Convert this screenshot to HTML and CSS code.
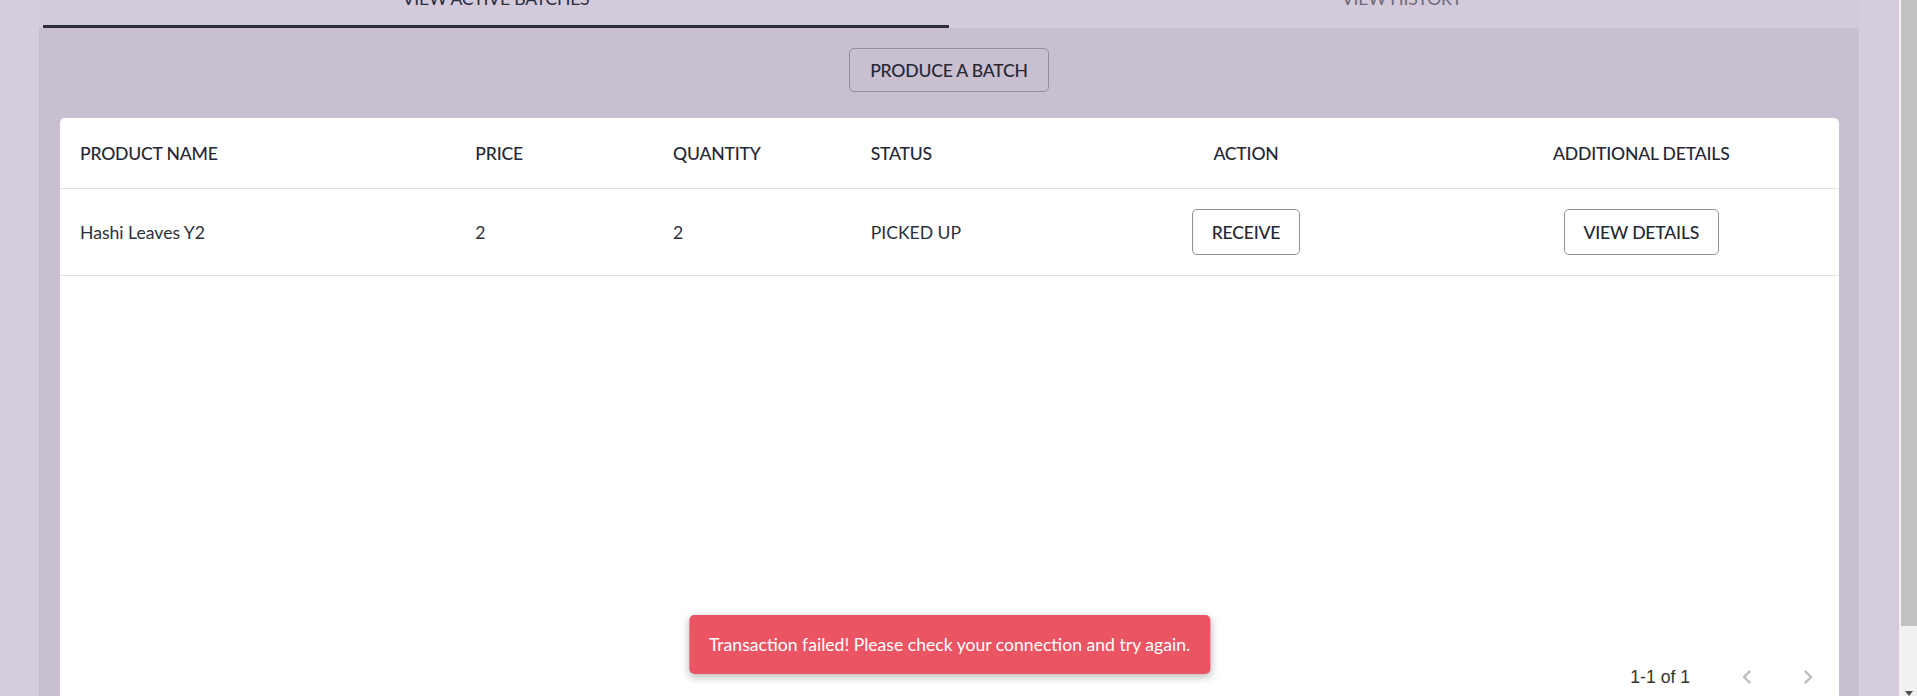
FILE: index.html
```html
<!DOCTYPE html>
<html lang="en">
<head>
<meta charset="utf-8">
<title>Active Batches</title>
<link rel="stylesheet" href="styles.css">
</head>
<body>
<div class="viewport">
  <main class="page">
    <section class="panel">
      <nav class="tabs">
        <div class="tab active">VIEW ACTIVE BATCHES</div>
        <div class="tab muted">VIEW HISTORY</div>
      </nav>
      <div class="actions">
        <button class="btn btn-ghost">PRODUCE A BATCH</button>
      </div>
      <div class="card">
        <div class="grid-row head">
          <div class="cell">PRODUCT NAME</div>
          <div class="cell">PRICE</div>
          <div class="cell">QUANTITY</div>
          <div class="cell">STATUS</div>
          <div class="cell center">ACTION</div>
          <div class="cell center">ADDITIONAL DETAILS</div>
        </div>
        <div class="grid-body">
          <div class="grid-row data">
            <div class="cell">Hashi Leaves Y2</div>
            <div class="cell">2</div>
            <div class="cell">2</div>
            <div class="cell">PICKED UP</div>
            <div class="cell center"><button class="btn btn-white">RECEIVE</button></div>
            <div class="cell center"><button class="btn btn-white">VIEW DETAILS</button></div>
          </div>
        </div>
        <div class="footer">
          <span class="count">1-1 of 1</span>
          <span class="pager-btn">
            <svg viewBox="0 0 24 24" width="28" height="28"><path d="M15.41 7.41 14 6l-6 6 6 6 1.41-1.41L10.83 12z"/></svg>
          </span>
          <span class="pager-btn">
            <svg viewBox="0 0 24 24" width="28" height="28"><path d="M10 6 8.59 7.41 13.17 12l-4.58 4.59L10 18l6-6z"/></svg>
          </span>
        </div>
      </div>
    </section>
    <div class="toast">Transaction failed! Please check your connection and try again.</div>
  </main>
  <div class="scrollbar">
    <div class="thumb"></div>
    <div class="arrow-down"></div>
  </div>
</div>
</body>
</html>
```
FILE: styles.css
```css
html, body {
  margin: 0;
  height: 100%;
  overflow: hidden;
}
body {
  font-family: Lato, "Open Sans", sans-serif;
  font-size: 17.6px;
  color: #252734;
  background: #d5ccdd;
}
.viewport {
  display: flex;
  height: 696px;
}
.page {
  position: relative;
  flex: 1;
  overflow: hidden;
}
.panel {
  width: 1820px;
  margin: -29px 0 0 39px;
  background: #c8bfd0;
  height: 740px;
}
.tabs {
  display: flex;
  height: 57px;
  padding: 0 4px;
  background: #d3cadc;
}
.tab {
  flex: 1;
  display: flex;
  align-items: center;
  justify-content: center;
  border-bottom: 3px solid transparent;
  color: #2c2e3b;
  letter-spacing: -0.2px;
}
.tab.active {
  border-bottom-color: #2b2d3a;
}
.tab.muted {
  color: #6e6a78;
}
.actions {
  display: flex;
  justify-content: center;
  padding-top: 20px;
  margin-bottom: 26px;
}
.btn {
  font-family: inherit;
  font-size: 17.6px;
  font-weight: 500;
  letter-spacing: -0.2px;
  height: 44px;
  padding: 0 20px;
  border-radius: 5px;
  color: #252734;
  cursor: pointer;
}
.btn-ghost {
  background: transparent;
  border: 1px solid #948d9e;
}
.btn-white {
  height: 46px;
  padding: 0 19px;
  background: #fff;
  border: 1px solid #8f8f8f;
}
.card {
  margin: 0 20px 0 21px;
  background: #fff;
  border-radius: 5px;
  overflow: hidden;
}
.grid-row {
  display: grid;
  grid-template-columns: 2fr 1fr 1fr 1fr 2fr 2fr;
  border-bottom: 1px solid #e0e0e0;
}
.head {
  height: 70px;
  font-weight: 500;
  letter-spacing: -0.2px;
}
.data {
  height: 86px;
  color: #2c2e3b;
}
.cell {
  display: flex;
  align-items: center;
  padding-left: 20px;
  white-space: nowrap;
}
.cell.center {
  justify-content: center;
  padding-left: 0;
}
.grid-body {
  height: 462px;
}
.footer {
  height: 52px;
  display: flex;
  align-items: center;
  justify-content: flex-end;
  padding-right: 17px;
  font-family: "Liberation Sans", Arial, sans-serif;
  font-size: 17.6px;
  color: #333;
}
.count {
  margin-right: 43px;
}
.pager-btn {
  display: flex;
  width: 28px;
  height: 28px;
  fill: #bdbdbd;
}
.pager-btn + .pager-btn {
  margin-left: 33px;
}
.toast {
  position: absolute;
  left: 50%;
  top: 615px;
  transform: translateX(-50%);
  height: 59px;
  padding: 0 20px;
  display: flex;
  align-items: center;
  background: #eb5463;
  color: #fff;
  border-radius: 5px;
  white-space: nowrap;
  box-shadow: 0 3px 8px rgba(0, 0, 0, 0.28);
}
.scrollbar {
  width: 18px;
  background: #f1f1f1;
  display: flex;
  flex-direction: column;
  align-items: flex-end;
}
.thumb {
  width: 16px;
  height: 626px;
  background: #c1c1c1;
}
.arrow-down {
  margin-top: 65px;
  margin-right: 4px;
  width: 0;
  height: 0;
  border-left: 4.5px solid transparent;
  border-right: 4.5px solid transparent;
  border-top: 5px solid #505050;
}
```
